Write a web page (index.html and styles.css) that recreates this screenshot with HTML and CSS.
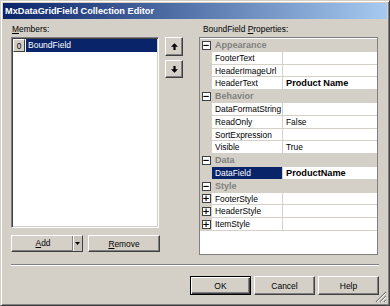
FILE: index.html
```html
<!DOCTYPE html>
<html>
<head>
<meta charset="utf-8">
<link rel="stylesheet" href="styles.css">
</head>
<body>
<div class="window">
  <div class="titlebar"><span class="title">MxDataGridField Collection Editor</span></div>
  <div class="body">
    <div class="left">
      <div class="label"><u>M</u>embers:</div>
      <div class="listbox">
        <div class="item"><span class="idx">0</span><span class="itemname">BoundField</span></div>
      </div>
      <div class="btnrow">
        <div class="btn split"><span class="main"><u>A</u>dd</span><span class="drop"><svg width="5" height="3" viewBox="0 0 5 3"><path d="M0 0H5L2.5 3Z" fill="#000"/></svg></span></div>
        <div class="btn wide"><u>R</u>emove</div>
      </div>
    </div>
    <div class="arrows">
      <div class="btn sq"><svg width="7" height="7" viewBox="0 0 7 7"><path d="M3.5 0.3L7 3.8H4.6V7H2.4V3.8H0Z" fill="#000"/></svg></div>
      <div class="btn sq"><svg width="7" height="7" viewBox="0 0 7 7"><path d="M3.5 6.7L7 3.2H4.6V0H2.4V3.2H0Z" fill="#000"/></svg></div>
    </div>
    <div class="right">
      <div class="label">BoundField <u>P</u>roperties:</div>
      <div class="grid">
        <div class="row cat"><span class="m"><i class="box">−</i></span><span class="catname">Appearance</span></div>
        <div class="row"><span class="m"></span><span class="n">FooterText</span><span class="v"></span></div>
        <div class="row"><span class="m"></span><span class="n">HeaderImageUrl</span><span class="v"></span></div>
        <div class="row"><span class="m"></span><span class="n">HeaderText</span><span class="v b">Product Name</span></div>
        <div class="row cat"><span class="m"><i class="box">−</i></span><span class="catname">Behavior</span></div>
        <div class="row"><span class="m"></span><span class="n">DataFormatString</span><span class="v"></span></div>
        <div class="row"><span class="m"></span><span class="n">ReadOnly</span><span class="v">False</span></div>
        <div class="row"><span class="m"></span><span class="n">SortExpression</span><span class="v"></span></div>
        <div class="row"><span class="m"></span><span class="n">Visible</span><span class="v">True</span></div>
        <div class="row cat"><span class="m"><i class="box">−</i></span><span class="catname">Data</span></div>
        <div class="row"><span class="m"></span><span class="n sel">DataField</span><span class="v b">ProductName</span></div>
        <div class="row cat"><span class="m"><i class="box">−</i></span><span class="catname">Style</span></div>
        <div class="row"><span class="m"><i class="box">+</i></span><span class="n">FooterStyle</span><span class="v"></span></div>
        <div class="row"><span class="m"><i class="box">+</i></span><span class="n">HeaderStyle</span><span class="v"></span></div>
        <div class="row"><span class="m"><i class="box">+</i></span><span class="n">ItemStyle</span><span class="v"></span></div>
      </div>
    </div>
  </div>
  <div class="sep"></div>
  <div class="footer">
    <div class="btn big default">OK</div>
    <div class="btn big">Cancel</div>
    <div class="btn big">Help</div>
  </div>
  <svg class="grip" width="12" height="12" viewBox="0 0 12 12">
    <path d="M11 1L1 11M11 5L5 11M11 9L9 11" stroke="#808080" stroke-width="1.2"/>
    <path d="M11 2L2 11M11 6L6 11M11 10L10 11" stroke="#ffffff" stroke-width="0.8"/>
  </svg>
</div>
</body>
</html>
```
FILE: styles.css
```css
* { box-sizing: border-box; }
html, body { margin: 0; padding: 0; }
body {
  width: 390px;
  height: 306px;
  overflow: hidden;
  background: #D4D0C8;
  font-family: "Liberation Sans", Arial, sans-serif;
  font-size: 8.4px;
  color: #000;
}
.window {
  position: relative;
  width: 390px;
  height: 306px;
  background: #D4D0C8;
  border: 1px solid;
  border-color: #D4D0C8 #404040 #404040 #D4D0C8;
  box-shadow: inset 1px 1px #ffffff, inset -1px -1px #808080;
  padding: 2px;
  display: flex;
  flex-direction: column;
}
.titlebar {
  height: 16px;
  background: linear-gradient(to right, #0A246A, #A6CAF0);
  display: flex;
  align-items: center;
  padding-left: 2px;
}
.title {
  color: #fff;
  font-weight: bold;
  font-size: 9.2px;
  letter-spacing: 0;
}
.body {
  display: flex;
  padding: 5px 9px 0 8px;
}
.label {
  height: 11px;
  line-height: 11px;
  padding-left: 1px;
}
u { text-decoration: underline; text-underline-offset: 1px; }
.left { width: 149px; display: flex; flex-direction: column; }
.listbox {
  margin-top: 2px;
  width: 148px;
  height: 191px;
  background: #fff;
  border: 1px solid;
  border-color: #808080 #ffffff #ffffff #808080;
  box-shadow: inset 1px 1px #404040, inset -1px -1px #D4D0C8;
  padding: 1px 1px;
}
.item {
  display: flex;
  height: 13px;
}
.idx {
  width: 12px;
  height: 13px;
  background: #D4D0C8;
  border: 1px solid;
  border-color: #ffffff #404040 #404040 #ffffff;
  display: flex;
  align-items: center;
  justify-content: center;
  font-size: 8.4px;
}
.itemname {
  flex: 1;
  margin-left: 1px;
  background: #0A246A;
  color: #fff;
  line-height: 13px;
  padding-left: 2px;
  font-size: 8.5px;
}
.btn {
  background: #D4D0C8;
  border: 1px solid;
  border-color: #ffffff #404040 #404040 #ffffff;
  box-shadow: inset -1px -1px #808080;
  display: flex;
  align-items: center;
  justify-content: center;
}
.btnrow {
  display: flex;
  gap: 5px;
  margin-top: 7px;
}
.btnrow .btn { width: 72px; height: 17px; }
.split { justify-content: stretch; padding: 0; }
.split .main {
  flex: 1;
  text-align: center;
  line-height: 15px;
  padding-left: 2px;
}
.split .drop {
  width: 10px;
  height: 15px;
  border-left: 1px solid #808080;
  box-shadow: inset 1px 0 #ffffff;
  display: flex;
  align-items: center;
  justify-content: center;
  background: #C8C4BC;
}
.arrows {
  margin-left: 5px;
  margin-top: 13px;
  display: flex;
  flex-direction: column;
  gap: 4px;
}
.sq { width: 18px; height: 19px; }
.arrows .sq + .sq { height: 18px; }
.right {
  margin-left: 16px;
  flex: 1;
  display: flex;
  flex-direction: column;
}
.right .label { padding-left: 4px; }
.grid {
  margin-top: 2px;
  height: 218px;
  background: #fff;
  border: 1px solid #808080;
  padding-top: 1px;
}
.row {
  display: grid;
  grid-template-columns: 12px 71px 1fr;
  height: 12.8px;
}
.row .m {
  background: #D4D0C8;
  display: flex;
  align-items: center;
  justify-content: center;
}
.row .n {
  border-bottom: 1px solid #D4D0C8;
  border-right: 1px solid #D4D0C8;
  padding-left: 3px;
  line-height: 12px;
  white-space: nowrap;
  overflow: hidden;
}
.row .v {
  border-bottom: 1px solid #D4D0C8;
  padding-left: 3px;
  line-height: 12px;
  white-space: nowrap;
}
.row .v.b { font-weight: bold; font-size: 9.2px; }
.row .n.sel { background: #0A246A; color: #fff; }
.row.cat { background: #D4D0C8; }
.catname {
  grid-column: 2 / 4;
  padding-left: 3px;
  line-height: 12.8px;
  font-weight: bold;
  color: #808080;
  font-size: 9px;
}
.box {
  width: 9px;
  height: 9px;
  background: #fff;
  border: 1px solid #404040;
  font-style: normal;
  font-size: 9px;
  line-height: 7px;
  font-weight: bold;
  display: flex;
  align-items: center;
  justify-content: center;
  font-family: "DejaVu Sans", sans-serif;
}
.sep {
  margin: 9px 8px 0 8px;
  height: 2px;
  border-top: 1px solid #808080;
  border-bottom: 1px solid #ffffff;
}
.footer {
  display: flex;
  justify-content: flex-end;
  gap: 3px;
  margin-top: 10px;
  padding-right: 8px;
}
.big { width: 61px; height: 19px; font-size: 8.5px; }
.default {
  border: 1px solid #000;
  box-shadow: inset 1px 1px #ffffff, inset -1px -1px #404040, inset -2px -2px #808080;
}
.grip {
  position: absolute;
  right: 2px;
  bottom: 2px;
}
```
